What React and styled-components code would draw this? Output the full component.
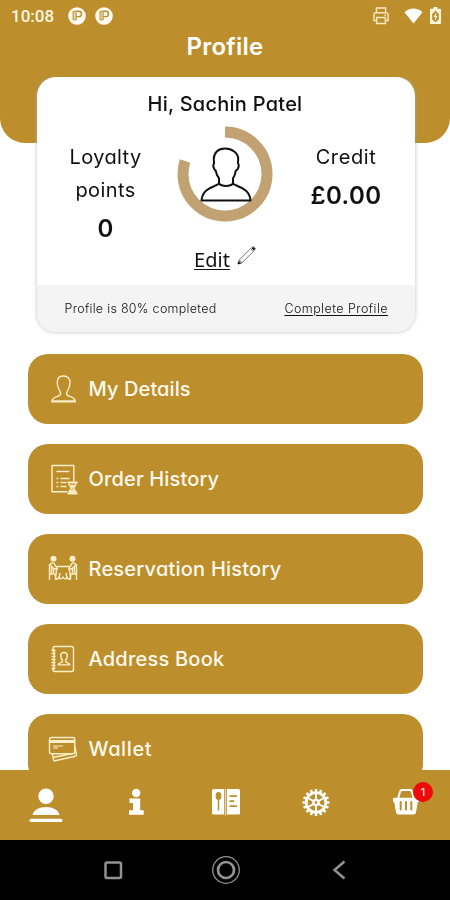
import React from 'react'
import styled, { createGlobalStyle } from 'styled-components'

const GOLD = '#bc8e2c'

const GlobalStyle = createGlobalStyle`
  * {
    box-sizing: border-box;
  }

  body {
    margin: 0;
    background: #fff;
    font-family: Inter, "Open Sans", sans-serif;
    font-feature-settings: 'cv11';
  }
`

const Screen = styled.div`
  width: 450px;
  height: 900px;
  display: flex;
  flex-direction: column;
  overflow: hidden;
  background: #fff;
`

const Header = styled.header`
  flex: none;
  height: 143px;
  border-radius: 0 0 25px 25px;
  background: ${GOLD};
  color: #fff;
`

const StatusBar = styled.div`
  display: flex;
  align-items: center;
  height: 31px;
  padding: 0 9px 0 11px;
`

const Clock = styled.span`
  width: 57px;
  font-family: Roboto, sans-serif;
  font-size: 17px;
  font-weight: 500;
  color: #fff6df;
`

const StatusIcons = styled.div`
  display: flex;
  align-items: center;
  gap: ${({ $gap }) => $gap || 9}px;
  margin-left: ${({ $end }) => ($end ? 'auto' : '0')};

  svg {
    display: block;
  }
`

const Title = styled.h1`
  margin: 0;
  font-size: 24px;
  font-weight: 600;
  line-height: 31px;
  letter-spacing: 0.25px;
  text-align: center;
`

const Content = styled.main`
  flex: 1;
  min-height: 0;
  margin-top: -66px;
  overflow: hidden;
`

const Card = styled.section`
  width: 378px;
  height: 255px;
  margin: 0 0 0 37px;
  display: flex;
  flex-direction: column;
  border-radius: 19px;
  overflow: hidden;
  background: #fff;
  color: #111;
`

const CardShadow = styled.div`
  width: 415px;
  height: 277px;
  filter: drop-shadow(0 0 2px rgba(170, 170, 170, 0.75));
`

const Greeting = styled.h2`
  margin: 12px 2px 0 0;
  font-size: 20px;
  font-weight: 500;
  line-height: 30px;
  letter-spacing: 0.25px;
  text-align: center;
`

const Summary = styled.div`
  flex: 1;
  display: grid;
  grid-template-columns: 137px 103px 138px;
`

const Stat = styled.div`
  padding-top: 22px;
  text-align: center;
`

const StatLabel = styled.div`
  font-size: 20px;
  line-height: 33px;
  letter-spacing: ${({ $spacing }) => $spacing || 0.4}px;
`

const StatValue = styled.div`
  font-size: 24px;
  font-weight: 600;
  line-height: 34px;
  margin-top: ${({ $gap }) => $gap || 5}px;
  letter-spacing: ${({ $spacing }) => $spacing || 0.3}px;
`

const Avatar = styled.div`
  display: flex;
  flex-direction: column;
  align-items: center;
  padding-top: 7px;
  margin-left: -1px;
`

const EditLink = styled.a`
  display: flex;
  gap: 7px;
  margin-top: 24px;
  line-height: 28px;
  font-family: "Noto Sans", "Open Sans", sans-serif;
  font-size: 20px;

  span {
    text-decoration: underline;
    text-decoration-thickness: 1px;
    text-underline-offset: 2px;
  }
`

const CardFooter = styled.div`
  display: flex;
  justify-content: space-between;
  height: 47px;
  padding: 0 27px 0 27.5px;
  background: #f4f4f4;
  font-size: 12.5px;
  font-weight: 300;
  line-height: 47px;
`

const Completion = styled.span`
  letter-spacing: ${({ $link }) => ($link ? 0.45 : 0.28)}px;
  text-decoration: ${({ $link }) => ($link ? 'underline' : 'none')};
  text-decoration-thickness: 1px;
  text-underline-offset: 2px;
`

const Menu = styled.nav`
  display: flex;
  flex-direction: column;
  gap: 20.5px;
  padding: 0 27.5px 0 28px;
`

const MenuItem = styled.div`
  flex: none;
  display: flex;
  align-items: center;
  height: 69.5px;
  padding-left: 17px;
  border-radius: 20px;
  background: ${GOLD};
  color: #fffaee;
  font-size: 20px;
  font-weight: 500;
  letter-spacing: ${({ $spacing }) => $spacing || 0}px;

  svg {
    flex: none;
    margin-right: 6.5px;
  }
`

const TabBar = styled.nav`
  flex: none;
  display: grid;
  grid-template-columns: repeat(5, 1fr);
  height: 70px;
  background: ${GOLD};
`

const Tab = styled.div`
  position: relative;
  display: flex;
  justify-content: center;
  padding: 14px 0 0 1px;

  svg {
    display: block;
  }
`

const Badge = styled.span`
  position: absolute;
  top: 12px;
  right: 17px;
  width: 20px;
  height: 20px;
  border-radius: 50%;
  background: #ec0a0a;
  color: #fff;
  font-size: 11px;
  line-height: 20px;
  text-align: center;
`

const SystemBar = styled.div`
  flex: none;
  display: flex;
  align-items: center;
  justify-content: center;
  gap: 83px;
  height: 60px;
  padding-left: 1px;
  background: #000;
`

const AppBadge = () => (
  <svg width="18" height="18" viewBox="0 0 18 18">
    <circle cx="9" cy="9" r="8.8" fill="#fffaf0" />
    <path d="M5 4.200h3.200v8.600H5z" fill="#e2cd9c" stroke={GOLD} strokeWidth=".9" />
    <path d="M8.200 4.200h2.600a2.700 2.700 0 0 1 0 5.400H8.200" fill="none" stroke={GOLD} strokeWidth="1.400" />
  </svg>
)

const PrinterIcon = () => (
  <svg width="16" height="18" viewBox="0 0 16 18" fill="none" stroke="#fbe9c0" strokeWidth="1.4">
    <path d="M3.4 5.5V1h9.2v4.5M3.4 13.5H.9V8a2.3 2.3 0 0 1 2.3-2.3h9.6A2.3 2.3 0 0 1 15.1 8v5.500h-2.500" />
    <path d="M3.6 10.500h8.800v6H3.600z" />
    <path d="M11.500 8.200h1.500" />
  </svg>
)

const WifiIcon = () => (
  <svg width="19" height="16" viewBox="0 0 19 16">
    <path d="M.5 4.200C5.500-.7 13.500-.7 18.500 4.200L9.500 15.500Z" fill="#fff" />
  </svg>
)

const BatteryIcon = () => (
  <svg width="11" height="17" viewBox="0 0 11 17">
    <path d="M3.500 0h4v1.700H10a1 1 0 0 1 1 1V16a1 1 0 0 1-1 1H1a1 1 0 0 1-1-1V2.700a1 1 0 0 1 1-1h2.500z" fill="#fff4dc" />
    <path d="M5.500 3.600 8.800 7v5.500l-3.300 2.700-3.300-2.700V7z" fill={GOLD} />
    <path d="M6.300 5 3.700 10h1.500v3.800L7.500 9H6.100z" fill="#fff4dc" />
  </svg>
)

const ProgressAvatar = () => (
  <svg width="96" height="96" viewBox="0 0 96 96" fill="none">
    <circle
      cx="48"
      cy="48"
      r="42"
      stroke="#c2a273"
      strokeWidth="11"
      pathLength="100"
      strokeDasharray="80 20"
      transform="rotate(-90 48 48)"
    />
    <path
      d="M48 22.500c-7 0-11.200 4.300-11.200 10.500 0 2 .3 3.400.3 4.600-1.300.6-1 3 .1 5.200.5 1.300 1.200 1.500 1.600 2 .4 3.300 1.900 5.700 3.200 7.500v5.200c-2 3.200-16.800 3.500-17.500 17h49c-.7-13.500-15.500-13.800-17.500-17v-5.200c1.300-1.800 2.300-4.200 2.700-7.500.4-.5 1.600-.7 2.100-2 1.100-2.200 1.400-4.600.1-5.200 0-1.200.3-2.600.3-4.600 0-6.200-6.200-10.500-13.200-10.500zM42 57.500c2.600 3.200 11.400 3.200 14 0"
      stroke="#111"
      strokeWidth="2"
      strokeLinejoin="round"
    />
  </svg>
)

const PencilIcon = () => (
  <svg width="19" height="19" viewBox="0 0 19 19" fill="none" stroke="#555" strokeWidth=".8">
    <path d="M1 18 2.300 13.900 15 1.200a1.500 1.500 0 0 1 2.100 0l.7.7a1.500 1.500 0 0 1 0 2.100L5.100 16.700zM2.300 13.900l2.800 2.800M13.600 2.600l2.800 2.800" />
    <path d="M15.600 1.700 17.400 3.500" stroke="#111" strokeWidth="2.300" />
    <path d="m1 18 .8-2.600 1.800 1.800z" fill="#111" stroke="#111" />
  </svg>
)

const MenuIcon = ({ children }) => (
  <svg
    width="37"
    height="36"
    viewBox="0 0 37 36"
    fill="none"
    stroke="#fff0c9"
    strokeWidth="1.400"
    strokeLinejoin="round"
  >
    {children}
  </svg>
)

const DetailsIcon = () => (
  <MenuIcon>
    <path d="M18.500 5c-4.200 0-6.300 2.600-6.300 6.600 0 4.500 1.200 6.700 2.900 9.300 1 1.700.5 3.400-1.500 4.100-3.200 1-6.600 1.500-6.800 5.700h23.600c-.2-4.200-3.600-4.700-6.800-5.700-2-.7-2.500-2.400-1.500-4.100 1.700-2.600 2.900-4.800 2.900-9.300 0-4-2.300-6.600-6.500-6.600z" />
    <path d="M7 29.600h23" strokeWidth=".8" />
  </MenuIcon>
)

const OrderIcon = () => (
  <MenuIcon>
    <path d="M22.500 30.700H7V4.500h21.800v16" />
    <path d="M11.500 10.500h13" />
    <path d="M11.500 17.500h1.800M11.500 21.500h1.800M11.500 25.500h1.800M15.500 17.500h9M15.500 21.500h6M15.500 25.500h6" strokeWidth="1.500" />
    <path d="M22.500 21.500h10M22.500 32.500h10" strokeWidth="2.200" />
    <path d="M24 22.500c0 2.500 1.500 3.300 2.800 4.500-1.300 1.300-2.800 2.300-2.800 5.300h7c0-3-1.500-4-2.800-5.300 1.300-1.200 2.800-2 2.800-4.500" />
    <path d="m25.500 31 2-2 2 2zM26 24.500h3l-1.500 1.500z" fill="#fff0c9" />
  </MenuIcon>
)

const ReservationIcon = () => (
  <MenuIcon>
    <circle cx="8.500" cy="7.700" r="2.300" fill="#fff0c9" />
    <circle cx="27.500" cy="7.700" r="2.300" fill="#fff0c9" />
    <path d="M6.500 12C4 13.500 4 21 5 23h5l.8 6M4.500 13v16M6 16l4 2h3M29.500 12c2.500 1.500 2.500 9 1.500 11h-5l-.8 6M31.500 13v16M30 16l-4 2h-3" />
    <path d="M6.500 12c2.500-.5 3.500 1 4 3.500M29.500 12c-2.500-.5-3.500 1-4 3.500M6.500 14v8M8.500 18v4M29.500 14v8M27.500 18v4" />
    <path d="M10.500 15.500h15M11.800 16l-1.300 12c2 .6 3-.5 3.500-2 .8 2.500 2.500 2.500 4 0 1.500 2.500 3.200 2.500 4 0 .5 1.500 1.500 2.600 3.500 2l-1.300-12M15 22l-.8 4M21 22l.8 4" />
  </MenuIcon>
)

const AddressIcon = () => (
  <MenuIcon>
    <rect x="8" y="5.500" width="20.500" height="25" rx="2" />
    <path d="M8 9v18" stroke={GOLD} strokeWidth="2" />
    <path d="M9 8v20" />
    <path d="M6.500 9.500h4M6.500 12.500h4M6.500 15.500h4M6.500 18.500h4M6.500 21.500h4M6.500 24.500h4M6.500 27.500h4" />
    <path d="M19 11.500c-2.500 0-3.500 1.800-3.200 4 .2 1.800.8 2.800 1.700 3.700.2 1.800-.8 2.300-2.300 2.700-1.300.4-2 .8-2 2h11.600c0-1.200-.7-1.600-2-2-1.500-.4-2.500-.9-2.300-2.700.9-.9 1.500-1.900 1.700-3.700.3-2.200-.7-4-3.200-4z" />
  </MenuIcon>
)

const WalletIcon = () => (
  <MenuIcon>
    <path d="M28 6.500a2 2 0 0 1 1.800 2v12.300a2 2 0 0 1-2 2H6.500a2 2 0 0 1-2-2V8.500a2 2 0 0 1 2-2z" />
    <path d="M4.500 10.500h25.200" strokeWidth="3" />
    <path d="M8 15h10M8 17h5" strokeWidth="1" />
    <path d="m7.500 23 1 5.600c.1.900.8 1.300 1.700 1.100l20-4.500c.9-.2 1.500-.8 1.300-1.700l-1.700-7.500M8 26.500l18.500-3.700" />
  </MenuIcon>
)

const UserTabIcon = () => (
  <svg width="36" height="40" viewBox="0 0 36 40" fill="#fff">
    <circle cx="18" cy="12.300" r="7.700" />
    <path d="M4.500 31c1-5 6.500-8 13.500-8s12.500 3 13.500 8z" />
    <rect x="1.500" y="34.800" width="33" height="3.200" rx="1.600" />
  </svg>
)

const InfoTabIcon = () => (
  <svg width="30" height="40" viewBox="0 0 30 40" fill="#fff">
    <circle cx="15.200" cy="9" r="4.200" />
    <path d="M8.500 14.500h10.700v11.700h3.500v4.500H8v-4.500h4V19H8.500z" />
  </svg>
)

const MenuTabIcon = () => (
  <svg width="30" height="40" viewBox="0 0 30 40">
    <path d="M2.500 5H13v25.500H2.500A1.500 1.500 0 0 1 1 29V6.500A1.500 1.500 0 0 1 2.500 5zM16 5h11.500A1.500 1.500 0 0 1 29 6.500V29a1.500 1.500 0 0 1-1.500 1.500H16z" fill="#fff" />
    <path d="M13.700 5v26.300h1.600V5z" fill="#fff" opacity=".65" />
    <ellipse cx="7.500" cy="12" rx="2.900" ry="3.900" fill={GOLD} />
    <path d="M7.500 15v11.500" stroke={GOLD} strokeWidth="1.500" />
    <path d="M18.500 12.200h7.500M18.500 17.200H23M18.500 22.200h7.500" stroke={GOLD} strokeWidth="1.800" />
  </svg>
)

const GearTabIcon = () => (
  <svg width="30" height="40" viewBox="0 0 30 40" fill="none">
    <g transform="translate(15 18.500)">
      <circle r="12" stroke="#fff" strokeWidth="3" pathLength="64" strokeDasharray="2 2" strokeDashoffset="1" />
      <circle r="9.800" stroke="#fff" strokeWidth="2.800" />
      <circle r="2.600" stroke="#fff" strokeWidth="2.400" />
      {[30, 90, 150, 210, 270, 330].map((angle) => (
        <path key={angle} d="M3 0h6" stroke="#fff" strokeWidth="2" transform={`rotate(${angle})`} />
      ))}
    </g>
  </svg>
)

const BasketTabIcon = () => (
  <svg width="30" height="40" viewBox="0 0 30 40" fill="none">
    <path d="M7 15 9 7.700C9.300 6.500 10 6 11.200 6h7.600c1.200 0 1.900.5 2.200 1.700l2 7.300" stroke="#fff" strokeWidth="2" />
    <path d="M3.200 13.800h23.600a1.200 1.200 0 0 1 1.200 1.200v3h-1.200l-1.900 10.700a2.200 2.200 0 0 1-2.200 1.800H7.300a2.200 2.200 0 0 1-2.200-1.800L3.200 18H2v-3a1.200 1.200 0 0 1 1.200-1.200z" fill="#fff" />
    <path d="M9.700 18v7.500M15 18v7.500M20.300 18v7.500" stroke={GOLD} strokeWidth="2" strokeLinecap="round" />
  </svg>
)

const SystemIcon = ({ children }) => (
  <svg width="30" height="30" viewBox="0 0 30 30" fill="none" stroke="#929292">
    {children}
  </svg>
)

const menuItems = [
  { label: 'My Details', icon: <DetailsIcon />, spacing: 0.1 },
  { label: 'Order History', icon: <OrderIcon />, spacing: 0.15 },
  { label: 'Reservation History', icon: <ReservationIcon />, spacing: 0.22 },
  { label: 'Address Book', icon: <AddressIcon />, spacing: 0.22 },
  { label: 'Wallet', icon: <WalletIcon />, spacing: 0.6 },
]

const App = () => {
  return (
    <>
      <GlobalStyle />
      <Screen>
        <Header>
          <StatusBar>
            <Clock>10:08</Clock>
            <StatusIcons>
              <AppBadge />
              <AppBadge />
            </StatusIcons>
            <StatusIcons $end $gap={15}>
              <PrinterIcon />
              <StatusIcons $gap={7}>
                <WifiIcon />
                <BatteryIcon />
              </StatusIcons>
            </StatusIcons>
          </StatusBar>
          <Title>Profile</Title>
        </Header>
        <Content>
          <CardShadow>
            <Card>
              <Greeting>Hi, Sachin Patel</Greeting>
              <Summary>
                <Stat>
                  <StatLabel>
                    Loyalty
                    <br />
                    points
                  </StatLabel>
                  <StatValue>0</StatValue>
                </Stat>
                <Avatar>
                  <ProgressAvatar />
                  <EditLink>
                    <span>Edit</span>
                    <PencilIcon />
                  </EditLink>
                </Avatar>
                <Stat>
                  <StatLabel $spacing={0.6}>Credit</StatLabel>
                  <StatValue $spacing={0.4}>£0.00</StatValue>
                </Stat>
              </Summary>
              <CardFooter>
                <Completion>Profile is 80% completed</Completion>
                <Completion $link>Complete Profile</Completion>
              </CardFooter>
            </Card>
          </CardShadow>
          <Menu>
            {menuItems.map((item) => (
              <MenuItem key={item.label} $spacing={item.spacing}>
                {item.icon}
                {item.label}
              </MenuItem>
            ))}
          </Menu>
        </Content>
        <TabBar>
          <Tab><UserTabIcon /></Tab>
          <Tab><InfoTabIcon /></Tab>
          <Tab><MenuTabIcon /></Tab>
          <Tab><GearTabIcon /></Tab>
          <Tab>
            <BasketTabIcon />
            <Badge>1</Badge>
          </Tab>
        </TabBar>
        <SystemBar>
          <SystemIcon>
            <rect x="7.500" y="7.500" width="15.500" height="15.500" rx="1.500" strokeWidth="2.500" />
          </SystemIcon>
          <SystemIcon>
            <circle cx="15" cy="15" r="13.300" strokeWidth="1.300" />
            <circle cx="15" cy="15" r="8" strokeWidth="2.700" />
          </SystemIcon>
          <SystemIcon>
            <path d="m20.500 6.500-10 8.500 10 8.500" strokeWidth="2.500" />
          </SystemIcon>
        </SystemBar>
      </Screen>
    </>
  )
}

export default App
